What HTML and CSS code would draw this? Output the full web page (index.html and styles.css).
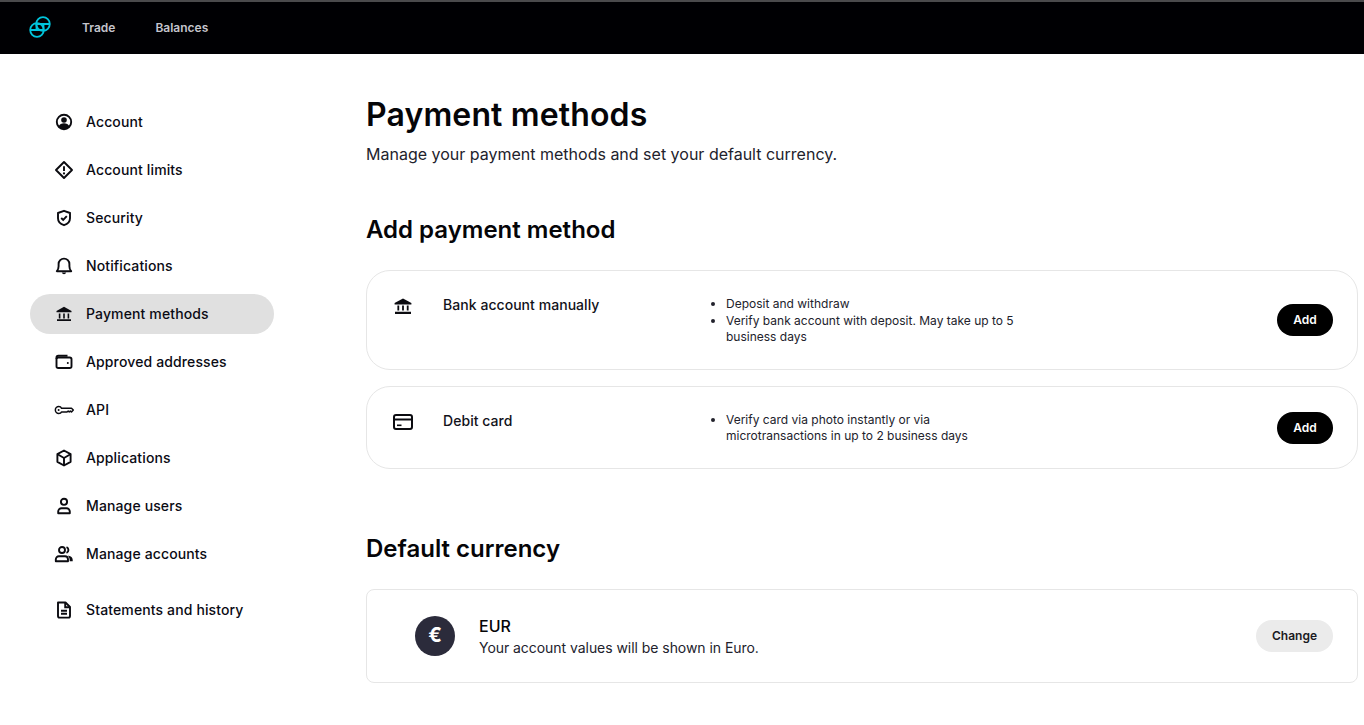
FILE: index.html
```html
<!DOCTYPE html>
<html lang="en">
<head>
<meta charset="utf-8">
<title>Payment methods</title>
<link rel="stylesheet" href="styles.css">
</head>
<body>
<header class="topbar">
  <svg class="logo" viewBox="0 0 22 22" width="22" height="22" fill="none" stroke="#00c4dc" stroke-width="1.800"><circle cx="8" cy="14" r="6.800"/><circle cx="14" cy="8" r="6.800"/><path d="M7.400 8H20.400M1.600 14H14.600M7.500 8V14M14.500 8V14"/></svg>
  <a class="toplink toplink-first">Trade</a>
  <a class="toplink">Balances</a>
</header>
<div class="layout">
  <nav class="sidebar">
    <a class="navitem"><svg class="ico" viewBox="0 0 20 20"><circle cx="10" cy="10" r="7.200" class="s"/><circle cx="10" cy="8" r="2.800" class="f"/><path d="M4.600 14.600c1-2.400 3-3.400 5.400-3.400s4.400 1 5.400 3.400A7.200 7.200 0 0 1 10 17.200a7.200 7.200 0 0 1-5.400-2.600z" class="f"/></svg>Account</a>
    <a class="navitem"><svg class="ico" viewBox="0 0 20 20"><path d="M10 2 18 10 10 18 2 10z" class="s join"/><path d="M10 6.200v4.800" class="s"/><circle cx="10" cy="13.400" r="1.100" class="f"/></svg>Account limits</a>
    <a class="navitem"><svg class="ico" viewBox="0 0 20 20"><path d="M10 2.800 16 5v5.200c0 3.400-2.400 5.800-6 7-3.600-1.200-6-3.600-6-7V5z" class="s join"/><path d="m7.200 10 2 2 3.600-3.800" class="s"/></svg>Security</a>
    <a class="navitem"><svg class="ico" viewBox="0 0 20 20"><path d="M2.800 15.200h14.400c-1.500-1.500-1.800-2.800-1.800-5V8a5.400 5.400 0 0 0-10.800 0v2.200c0 2.200-.3 3.500-1.800 5z" class="s join"/><path d="M7.800 16.500a2.300 2.300 0 0 0 4.400 0z" class="f"/></svg>Notifications</a>
    <a class="navitem navitem-active"><svg class="ico" viewBox="0 0 20 20"><path d="M10 2.800 17.500 7v1.300h-15V7z" class="f"/><path d="M3 15.300h14v1.700H3zM4.800 9.500h1.600v5H4.800zM9.200 9.500h1.600v5H9.200zM13.600 9.500h1.600v5h-1.600z" class="f"/></svg>Payment methods</a>
    <a class="navitem"><svg class="ico" viewBox="0 0 20 20"><rect x="2.500" y="5.500" width="15" height="10.500" rx="1.800" class="s"/><path d="M2.500 7V5.500c0-1 .8-1.800 1.800-1.800h9.200" class="s"/><circle cx="13.800" cy="11" r="1" class="f"/></svg>Approved addresses</a>
    <a class="navitem"><svg class="ico" viewBox="0 0 20 20"><path d="M4.800 6.600c1.300 0 2.300.7 2.800 1.700h9.900l1.800 1.700-1.800 1.900-1.100-.8-1.100.8-1.100-.8-1.100.8H7.600c-.5 1-1.500 1.600-2.800 1.600a3.400 3.400 0 0 1 0-6.900z" class="s join thin"/><circle cx="4.600" cy="10" r="1" class="f"/></svg>API</a>
    <a class="navitem"><svg class="ico" viewBox="0 0 20 20"><path d="M10 2.500 16.600 6.200v7.600L10 17.500l-6.600-3.700V6.200z" class="s join"/><path d="M3.600 6.300 10 10l6.400-3.700M10 10v7.300" class="s join"/></svg>Applications</a>
    <a class="navitem"><svg class="ico" viewBox="0 0 20 20"><circle cx="10" cy="5.800" r="3.100" class="s"/><path d="M4.200 17.200v-1.700c0-2 1.600-3.300 3.300-3.300h5c1.700 0 3.300 1.300 3.300 3.300v1.700z" class="s join"/></svg>Manage users</a>
    <a class="navitem"><svg class="ico" viewBox="0 0 20 20"><circle cx="8" cy="6" r="3" class="s"/><path d="M1.800 17.200v-1.700c0-2 1.500-3.300 3-3.300h6.200c1.600 0 3 1.300 3 3.300v1.700z" class="s join"/><path d="M12.500 3.200a3 3 0 0 1 0 5.600" class="s"/><path d="M14.800 11.800c2 .4 3.900 1.700 3.900 3.900v1.500h-3c0-2.200-.2-4-1.800-5.400z" class="f"/></svg>Manage accounts</a>
    <a class="navitem navitem-last"><svg class="ico" viewBox="0 0 20 20"><path d="M4 2.500h7.500L16 7v9c0 .9-.7 1.600-1.600 1.600H5.600C4.700 17.600 4 16.900 4 16z" class="s join"/><path d="M11.200 2.500v4.700H16M7 10.800h6M7 13.800h6" class="s"/></svg>Statements and history</a>
  </nav>
  <main class="content">
    <h1 class="title">Payment methods</h1>
    <p class="subtitle">Manage your payment methods and set your default currency.</p>
    <h2 class="section-title">Add payment method</h2>
    <section class="card card-bank">
      <svg class="card-ico" viewBox="0 0 20 20"><path d="M10 2.600 18.400 7v1.400H1.600V7z" class="f"/><path d="M2 15.800h16V18H2zM4.400 9.600h1.800v5H4.400zM9.100 9.600h1.800v5H9.100zM13.800 9.600h1.800v5h-1.800z" class="f"/></svg>
      <div class="card-name">Bank account manually</div>
      <ul class="card-list">
        <li>Deposit and withdraw</li>
        <li>Verify bank account with deposit. May take up to 5 business days</li>
      </ul>
      <button class="btn btn-add">Add</button>
    </section>
    <section class="card card-debit">
      <svg class="card-ico" viewBox="0 0 20 20"><rect x="1" y="3" width="18" height="14" rx="2" class="s wide"/><path d="M1 7.500h18" class="s wide"/><path d="M4 12.500h4.500v1.600H4z" class="f"/></svg>
      <div class="card-name">Debit card</div>
      <ul class="card-list">
        <li>Verify card via photo instantly or via microtransactions in up to 2 business days</li>
      </ul>
      <button class="btn btn-add">Add</button>
    </section>
    <h2 class="section-title section-currency">Default currency</h2>
    <section class="currency">
      <div class="euro">€</div>
      <div class="currency-text">
        <div class="currency-code">EUR</div>
        <div class="currency-desc">Your account values will be shown in Euro.</div>
      </div>
      <button class="btn btn-change">Change</button>
    </section>
  </main>
</div>
</body>
</html>
```

FILE: styles.css
```css
* { box-sizing: border-box; }
html, body { margin: 0; padding: 0; height: 100%; overflow: hidden; }
body { font-family: Inter, "Liberation Sans", sans-serif; background: #fff; color: #0b0b10; }

.topbar {
  height: 54px;
  background: #000003;
  border-top: 2px solid #4a4a4c;
  display: flex;
  align-items: center;
  padding: 0 0 2px 29px;
}
.logo { display: block; flex: none; }
.toplink { font-size: 12px; font-weight: 600; color: #c4c4cc; margin-right: 40px; }
.toplink-first { margin-left: 31px; }

.layout { display: flex; }
.sidebar { width: 366px; flex: none; padding: 48px 0 0 30px; display: flex; flex-direction: column; gap: 8px; }
.navitem {
  width: 244px;
  height: 40px;
  border-radius: 20px;
  display: flex;
  align-items: center;
  padding: 0 0 2px 24px;
  font-size: 14px;
  font-weight: 500;
  letter-spacing: .13px;
  color: #0b0b14;
}
.navitem-active { background: #e0e0e0; }
.navitem-last { margin-top: 8px; }
.ico { width: 20px; height: 20px; margin: 2px 12px 0 0; flex: none; }
.s { fill: none; stroke: #0b0b10; stroke-width: 1.900; }
.thin { stroke-width: 1.500; }
.wide { stroke-width: 2; }
.join { stroke-linejoin: round; }
.f { fill: #0b0b10; }

.content { width: 992px; flex: none; padding-top: 41px; }
.title { margin: 0; font-size: 32px; line-height: 40px; font-weight: 600; letter-spacing: .13px; color: #050508; }
.subtitle { margin: 7px 0 0; font-size: 16px; line-height: 24px; color: #22222c; }
.section-title { margin: 48px 0 0; font-size: 24px; line-height: 32px; font-weight: 600; color: #050508; }
.section-currency { margin-top: 64px; }

.card {
  margin-top: 24px;
  border: 1px solid #e6e6e6;
  border-radius: 24px;
  display: flex;
  align-items: flex-start;
}
.card-bank { height: 100px; }
.card-debit { height: 83px; margin-top: 16px; }
.card-ico { width: 20px; height: 20px; flex: none; margin: 25px 0 0 26px; }
.card-name { width: 263px; flex: none; margin: 24px 0 0 30px; font-size: 14px; line-height: 20px; font-weight: 500; letter-spacing: .05px; color: #12121a; }
.card-list {
  width: 320px;
  margin: 25px 0 0;
  padding: 0 0 0 20px;
  font-size: 12px;
  line-height: 16.500px;
  color: #22222c;
}
.card-debit .card-list { line-height: 16px; }
.btn { border: 0; font-family: inherit; font-size: 12px; font-weight: 600; border-radius: 16px; height: 32px; width: 56px; padding: 0; }
.btn-add { background: #000; color: #fff; margin-left: auto; margin-right: 24px; align-self: center; }
.card-bank .btn-add { padding-bottom: 2px; }

.currency {
  margin-top: 24px;
  height: 94px;
  border: 1px solid #e6e6e6;
  border-radius: 8px;
  display: flex;
  align-items: center;
  padding-left: 48px;
}
.euro {
  width: 40px;
  height: 40px;
  border-radius: 50%;
  background: #2b2b3b;
  color: #fff;
  font-weight: 700;
  font-size: 20px;
  padding-bottom: 2px;
  display: flex;
  align-items: center;
  justify-content: center;
  flex: none;
}
.currency-text { margin-left: 24px; }
.currency-code { font-size: 16px; line-height: 22px; font-weight: 500; color: #050508; }
.currency-desc { font-size: 14px; line-height: 20px; margin-top: 1px; letter-spacing: -.05px; color: #22222c; }
.btn-change { background: #ebebeb; color: #1a1a22; width: 77px; margin-left: auto; margin-right: 24px; padding-bottom: 2px; }
```
